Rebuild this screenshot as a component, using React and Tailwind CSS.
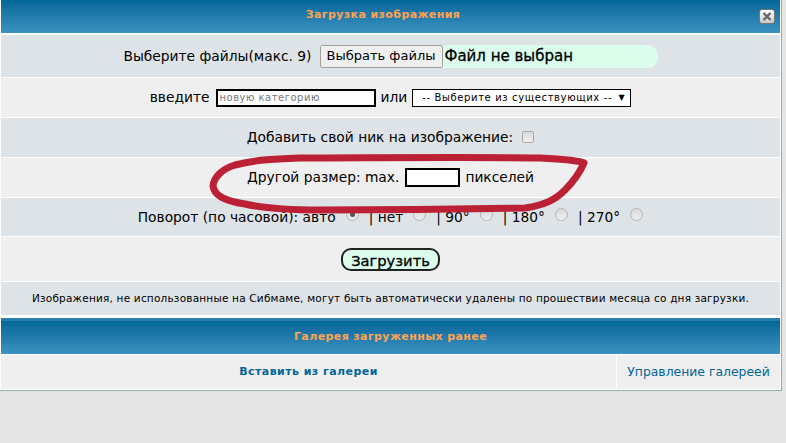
import React from 'react';

const Radio = ({ checked }) => (
    <span className="inline-flex items-center justify-center w-[13px] h-[13px] rounded-full border border-[#b4b4b4] bg-gradient-to-b from-[#d8d8d8] to-[#f0f0f0] relative top-[-3px]">
        {checked && <span className="w-[5px] h-[5px] rounded-full bg-[#555]" />}
    </span>
);

const Row = ({ className = '', children }) => (
    <div className={`flex items-center justify-center text-[13.8px] text-black ${className}`}>{children}</div>
);

const Header = ({ children, className = '' }) => (
    <div className={`flex items-center justify-center bg-gradient-to-b from-[#006699] to-[#3a93c0] text-[11px] font-bold tracking-[0.4px] text-[#ffa34f] ${className}`}>
        {children}
    </div>
);

export default function App() {
    return (
        <div className="w-[786px] h-[443px] bg-[#e5e5e5] overflow-hidden font-['DejaVu_Sans',sans-serif]">
            <div className="relative w-[782px] h-[391px] bg-white border-r border-b border-[#98aab1] pl-px pr-px flex flex-col">
                <Header className="relative h-[33px] mb-[2px] pr-[15px]">
                    <span className="relative top-[-1px]">Загрузка изображения</span>
                    <button className="absolute left-[758px] top-[9px] w-[16px] h-[15px] rounded-[3px] border border-[#777] bg-gradient-to-b from-white to-[#c8c8c8] flex items-center justify-center">
                        <svg width="10" height="9" viewBox="0 0 10 9">
                            <path d="M1.5 1 L8.5 8 M8.5 1 L1.5 8" stroke="#666" strokeWidth="2.4" />
                        </svg>
                    </button>
                </Header>

                <Row className="h-[42px] mb-px bg-[#dee3e7]">
                    <span className="mr-[8px]">Выберите файлы(макс. 9)</span>
                    <span className="flex items-center h-[23px] w-[338px] rounded-r-[11px] bg-[#dbfdec]">
                        <button className="h-[23px] w-[123px] shrink-0 rounded-[2px] border border-[#a0a0a0] bg-[#efefef] text-[13px] text-black">Выбрать файлы</button>
                        <span className="ml-[2px] text-[15px] [-webkit-text-stroke:0.3px_black] text-black">Файл не выбран</span>
                    </span>
                </Row>

                <Row className="h-[39px] mb-px bg-[#efefef]">
                    <span className="mr-[6px]">введите</span>
                    <span className="flex items-center w-[160px] h-[18px] border-2 border-black bg-white pl-[2px] text-[10px] tracking-[0.5px] text-[#777]">новую категорию</span>
                    <span className="mx-[5px]">или</span>
                    <span className="flex items-center justify-between w-[219px] h-[18px] border border-black bg-white pl-[9px] pr-[5px] text-[10px] tracking-[0.62px]">
                        -- Выберите из существующих --
                        <span className="text-[8px]">▼</span>
                    </span>
                </Row>

                <Row className="h-[39px] mb-px bg-[#dee3e7]">
                    <span className="mr-[9px]">Добавить свой ник на изображение:</span>
                    <span className="w-[12px] h-[12px] rounded-[2px] border border-[#aaa] bg-gradient-to-b from-[#d8d8d8] to-[#f0f0f0] relative top-[-1px]" />
                </Row>

                <Row className="h-[39px] mb-px bg-[#efefef]">
                    <span className="mr-[6px]">Другой размер: max.</span>
                    <span className="w-[55px] h-[19px] border-2 border-black bg-white mr-[5px]" />
                    <span>пикселей</span>
                </Row>

                <Row className="h-[38px] mb-px bg-[#dee3e7] gap-[10px]">
                    <span>Поворот (по часовой): авто</span>
                    <Radio checked />
                    <span>| нет</span>
                    <Radio />
                    <span>| 90°</span>
                    <Radio />
                    <span>| 180°</span>
                    <Radio />
                    <span>| 270°</span>
                    <Radio />
                </Row>

                <Row className="h-[44px] mb-px bg-[#efefef]">
                    <button className="w-[99px] h-[23px] rounded-[10px] border-2 border-[#222] bg-[#dbfdec] text-[14.7px] [-webkit-text-stroke:0.3px_black] text-black">Загрузить</button>
                </Row>

                <Row className="h-[33px] mb-[3px] bg-[#dee3e7]">
                    <span className="text-[10.5px] tracking-[0.2px] whitespace-nowrap">Изображения, не использованные на Сибмаме, могут быть автоматически удалены по прошествии месяца со дня загрузки.</span>
                </Row>

                <Header className="h-[36px] mb-px border-t-[3px] border-[#2a7fa8]">
                    <span>Галерея загруженных ранее</span>
                </Header>

                <div className="flex h-[34px]">
                    <div className="flex-1 flex items-center justify-center bg-[#efefef] text-[11px] font-bold tracking-[0.45px] text-[#006699]">Вставить из галереи</div>
                    <div className="w-[163px] ml-px flex items-center justify-center bg-[#efefef] text-[12.4px] text-[#006699]">Управление галереей</div>
                </div>

                <svg className="absolute left-0 top-0 pointer-events-none" width="782" height="391" viewBox="0 0 782 391" fill="none">
                    <path
                        d="M584 163 C578 160 560 159 540 158 C470 157 360 158 300 158 C270 159 255 160 235 165 C222 169 214 177 213 186 C214 195 224 201 245 204 C262 208 285 210 320 210 C380 210 470 209 525 208 C545 205 555 200 565 190 C573 182 580 172 584 163 Z"
                        stroke="#bc2035"
                        strokeWidth="7"
                        strokeLinejoin="round"
                    />
                </svg>
            </div>
        </div>
    );
}
